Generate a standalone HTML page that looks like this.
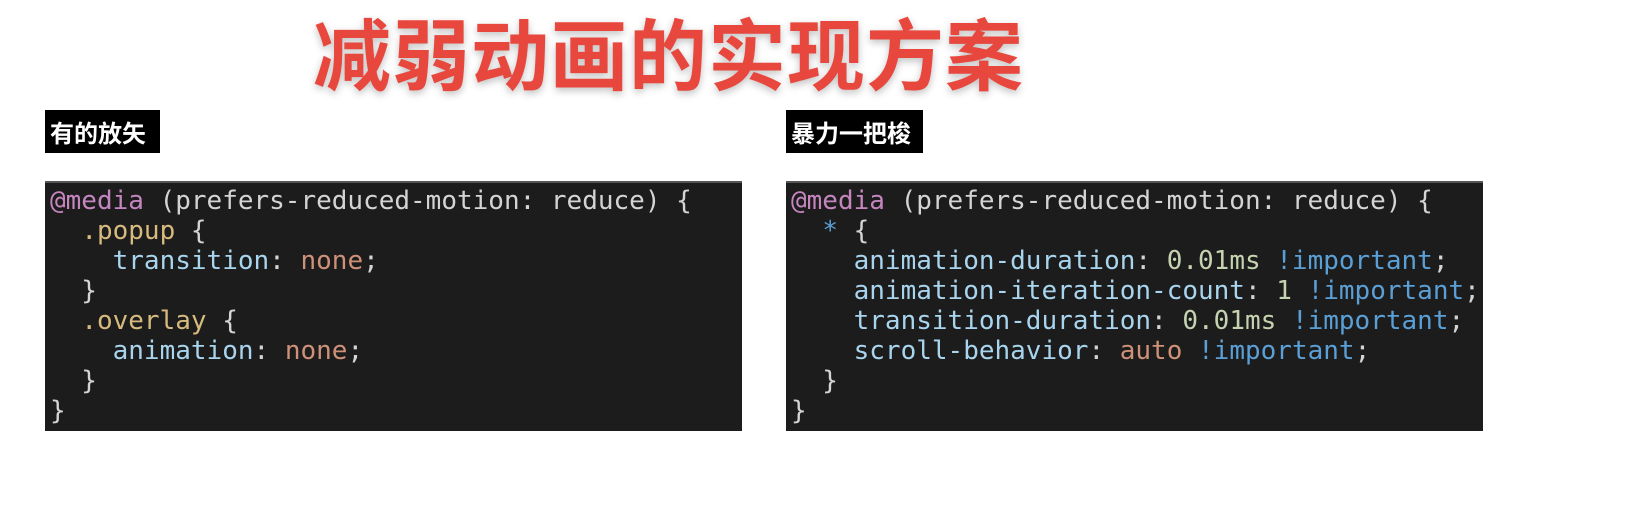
<!DOCTYPE html>
<html><head><meta charset="utf-8"><style>
body{margin:0;width:1634px;height:525px;background:#fff;position:relative;overflow:hidden;font-family:"Liberation Sans","Noto Sans CJK SC",sans-serif}
.title{position:absolute;left:313px;top:7px;font-size:78px;font-weight:bold;color:#e8473d;letter-spacing:1px;text-shadow:0 3px 8px rgba(0,0,0,.25);white-space:nowrap;line-height:100px}
.lab{position:absolute;top:110px;height:43px;background:#000;color:#fff;font-size:24px;font-weight:bold;line-height:43px;padding:0 5px;box-sizing:border-box;font-family:"Noto Sans CJK SC",sans-serif}
.code{position:absolute;top:181px;width:697px;height:250px;background:#1c1c1c;box-sizing:border-box;padding:3px 0 0 5px;font-family:"DejaVu Sans Mono","Liberation Mono",monospace;font-size:26px;line-height:30px;color:#d4d4d4;white-space:pre;border-top:2px solid #555}
.k{color:#c586c0}.p{color:#a8d4ee}.s{color:#d7ba7d}.v{color:#ce9178}.n{color:#c5d3b0}.i{color:#5a9fd6}
</style></head><body>
<div class="title">减弱动画的实现方案</div>
<div class="lab" style="left:45px;width:115px">有的放矢</div>
<div class="lab" style="left:786px;width:137px">暴力一把梭</div>
<div class="code" style="left:45px"><span class="k">@media</span> (prefers-reduced-motion: reduce) {
  <span class="s">.popup</span> {
    <span class="p">transition</span>: <span class="v">none</span>;
  }
  <span class="s">.overlay</span> {
    <span class="p">animation</span>: <span class="v">none</span>;
  }
}</div>
<div class="code" style="left:786px"><span class="k">@media</span> (prefers-reduced-motion: reduce) {
  <span class="i">*</span> {
    <span class="p">animation-duration</span>: <span class="n">0.01ms</span> <span class="i">!important</span>;
    <span class="p">animation-iteration-count</span>: <span class="n">1</span> <span class="i">!important</span>;
    <span class="p">transition-duration</span>: <span class="n">0.01ms</span> <span class="i">!important</span>;
    <span class="p">scroll-behavior</span>: <span class="v">auto</span> <span class="i">!important</span>;
  }
}</div>
</body></html>
